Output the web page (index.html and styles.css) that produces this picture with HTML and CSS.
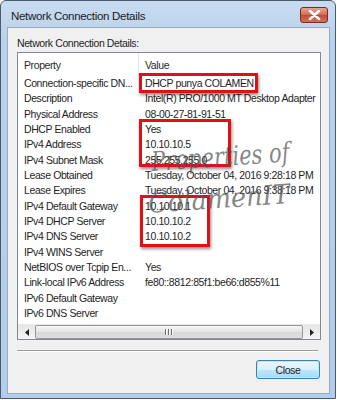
FILE: index.html
```html
<!DOCTYPE html>
<html lang="en">
<head>
    <meta charset="UTF-8">
    <title>Network Connection Details</title>
    <link rel="stylesheet" href="styles.css">
</head>
<body>
    <div class="shot">
        <div class="window">
            <!-- Title bar -->
            <div class="titlebar">
                <span class="title">Network Connection Details</span>
                <div class="close-x">
                    <svg width="13" height="10" viewBox="0 0 13 10">
                        <path d="M2 1 L11 9 M11 1 L2 9" stroke="#fff" stroke-width="2.6" stroke-linecap="round"/>
                    </svg>
                </div>
            </div>

            <!-- Client area -->
            <div class="client">
                <div class="label">Network Connection Details:</div>

                <div class="list">
                    <div class="list-head">
                        <div class="col-prop">Property</div>
                        <div class="col-val">Value</div>
                    </div>
                    <div class="rows">
                        <div class="cell">Connection-specific DN...</div><div class="cell">DHCP punya COLAMEN</div>
                        <div class="cell">Description</div><div class="cell">Intel(R) PRO/1000 MT Desktop Adapter</div>
                        <div class="cell">Physical Address</div><div class="cell">08-00-27-81-91-51</div>
                        <div class="cell">DHCP Enabled</div><div class="cell">Yes</div>
                        <div class="cell">IPv4 Address</div><div class="cell">10.10.10.5</div>
                        <div class="cell">IPv4 Subnet Mask</div><div class="cell">255.255.255.0</div>
                        <div class="cell">Lease Obtained</div><div class="cell">Tuesday, October 04, 2016 9:28:18 PM</div>
                        <div class="cell">Lease Expires</div><div class="cell">Tuesday, October 04, 2016 9:38:18 PM</div>
                        <div class="cell">IPv4 Default Gateway</div><div class="cell">10.10.10.1</div>
                        <div class="cell">IPv4 DHCP Server</div><div class="cell">10.10.10.2</div>
                        <div class="cell">IPv4 DNS Server</div><div class="cell">10.10.10.2</div>
                        <div class="cell">IPv4 WINS Server</div><div class="cell"></div>
                        <div class="cell">NetBIOS over Tcpip En...</div><div class="cell">Yes</div>
                        <div class="cell">Link-local IPv6 Address</div><div class="cell">fe80::8812:85f1:be66:d855%11</div>
                        <div class="cell">IPv6 Default Gateway</div><div class="cell"></div>
                        <div class="cell">IPv6 DNS Server</div><div class="cell"></div>
                    </div>

                    <!-- horizontal scrollbar -->
                    <div class="hscroll">
                        <div class="arrow">
                            <svg width="4" height="7" viewBox="0 0 4 7"><path d="M4 0 L0 3.5 L4 7 Z" fill="#222"/></svg>
                        </div>
                        <div class="thumb">
                            <span class="grip"></span><span class="grip"></span><span class="grip"></span>
                        </div>
                        <div class="arrow">
                            <svg width="4" height="7" viewBox="0 0 4 7"><path d="M0 0 L4 3.5 L0 7 Z" fill="#222"/></svg>
                        </div>
                    </div>
                </div>

                <div class="separator"></div>

                <div class="actions">
                    <button class="btn">Close</button>
                </div>
            </div>
        </div>

        <!-- annotations drawn on top of the screenshot -->
        <div class="mark mark-1"></div>
        <div class="mark mark-2"></div>
        <div class="mark mark-3"></div>
        <div class="watermark wm-1">Properties of</div>
        <div class="watermark wm-2">ColamenIT</div>
    </div>
</body>
</html>
```

FILE: styles.css
```css
* {
    box-sizing: border-box;
}

body {
    margin: 0;
    background: #fff;
    font-family: "Liberation Sans", Arial, sans-serif;
    font-size: 10.5px;
    letter-spacing: -0.4px;
    color: #1e1e1e;
}

.shot {
    position: relative;
    width: 337px;
    height: 400px;
}

/* Window frame */
.window {
    width: 336px;
    height: 399px;
    border: 1px solid #4a5a6e;
    border-radius: 6px 6px 0 0;
    background: linear-gradient(#c8dcf1, #b9d1ea 40px, #b4cde8);
    padding: 0 5px 4px 6px;
    display: flex;
    flex-direction: column;
}

.titlebar {
    height: 26px;
    display: flex;
    align-items: center;
    justify-content: space-between;
    padding: 0 2px 0 4px;
}

.title {
    font-size: 11.5px;
    letter-spacing: -0.3px;
    color: #1a1a1a;
    padding-top: 4px;
}

.close-x {
    width: 28px;
    height: 16px;
    margin-top: 2px;
    border: 1px solid #7a2a1e;
    border-radius: 3px;
    background: linear-gradient(#e8a593, #d06a55 50%, #c24a33 51%, #d0735b);
    display: flex;
    align-items: center;
    justify-content: center;
}

/* Client area */
.client {
    flex: 1;
    background: #f0f0f0;
    border: 1px solid #98abc2;
    padding: 8px 8px 0 9px;
    display: flex;
    flex-direction: column;
}

.label {
    height: 16px;
    line-height: 15px;
}

.list {
    height: 288px;
    border: 1px solid #828790;
    background: #fff;
    display: flex;
    flex-direction: column;
}

.list-head {
    height: 23px;
    display: grid;
    grid-template-columns: 121px 1fr;
    line-height: 24px;
    color: #2a2a2a;
}

.col-prop {
    padding-left: 6px;
    border-right: 1px solid #e5e5e5;
}

.col-val {
    padding-left: 6px;
}

.rows {
    flex: 1;
    display: grid;
    grid-template-columns: 121px 1fr;
    grid-auto-rows: 15.33px;
    line-height: 15.33px;
    align-content: start;
}

.cell {
    padding-left: 6px;
    white-space: nowrap;
    overflow: hidden;
}

/* Scrollbar */
.hscroll {
    height: 15px;
    display: flex;
    background: linear-gradient(#e6e6e6, #f4f4f4);
    border-top: 1px solid #e9e9e9;
}

.arrow {
    width: 17px;
    display: flex;
    align-items: center;
    justify-content: center;
}

.thumb {
    flex: 1;
    border: 1px solid #979797;
    border-radius: 2px;
    background: linear-gradient(#f6f6f6, #e4e4e4 50%, #d8d8d8 51%, #dedede);
    display: flex;
    align-items: center;
    justify-content: center;
    gap: 1px;
}

.grip {
    width: 2px;
    height: 6px;
    background: #6a6a6a;
    border-right: 1px solid #fff;
}

.separator {
    height: 2px;
    margin: 10px 3px 0 0;
    border-top: 1px solid #a0a0a0;
    border-bottom: 1px solid #fff;
}

.actions {
    display: flex;
    justify-content: flex-end;
    padding: 8px 1px 0 0;
}

.btn {
    width: 64px;
    height: 19px;
    border: 1px solid #3c7fb1;
    border-radius: 3px;
    background: linear-gradient(#eaf6fd, #d9f0fc 50%, #bee6fd 51%, #a7d9f5);
    box-shadow: inset 0 0 0 1px #c4e5f6;
    font-family: "Liberation Sans", Arial, sans-serif;
    font-size: 10.5px;
    letter-spacing: -0.4px;
    color: #1e1e1e;
    padding: 0;
}

/* Red annotation boxes */
.mark {
    position: absolute;
    border: 3px solid #e0101a;
    box-shadow: 1px 2px 3px rgba(0, 0, 0, 0.45);
}

.mark-1 { left: 139px; top: 73px; width: 119px; height: 20px; }
.mark-2 { left: 139px; top: 119px; width: 92px; height: 48px; }
.mark-3 { left: 140px; top: 195px; width: 70px; height: 52px; }

.watermark {
    position: absolute;
    font-family: "DejaVu Serif", serif;
    font-style: italic;
    font-size: 27px;
    letter-spacing: 0;
    color: rgba(80, 80, 80, 0.7);
    white-space: nowrap;
    transform-origin: left top;
    transform: rotate(-4deg) scaleX(0.78);
}

.wm-1 { left: 150px; top: 146px; }
.wm-2 { left: 147px; top: 188px; transform: rotate(-4deg) scaleX(0.95); }
```
